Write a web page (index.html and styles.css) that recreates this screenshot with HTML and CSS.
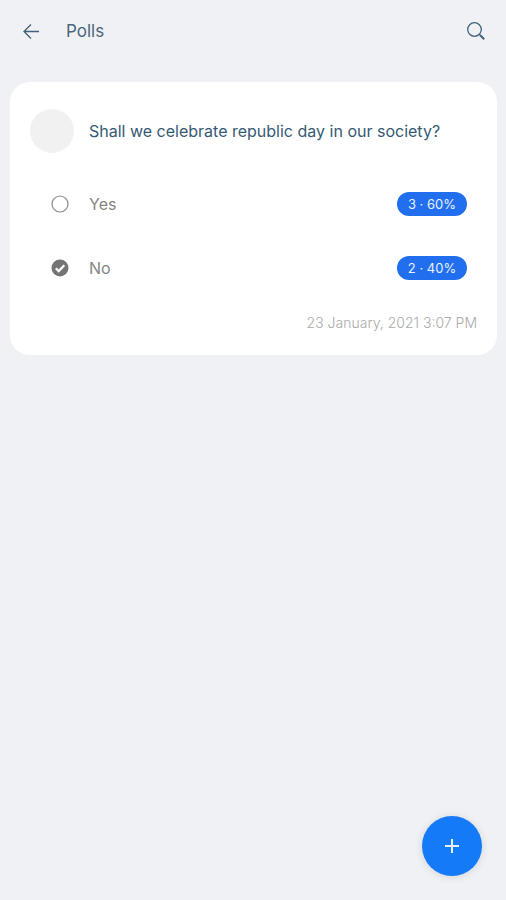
FILE: index.html
```html
<!DOCTYPE html>
<html lang="en">
<head>
  <meta charset="utf-8">
  <meta name="viewport" content="width=device-width, initial-scale=1">
  <title>Polls</title>
  <link rel="stylesheet" href="styles.css">
</head>
<body>
  <header class="app-bar">
    <button class="icon-button" type="button" aria-label="Back">
      <svg class="icon" viewBox="0 0 20 20" aria-hidden="true"><path d="M19 10.5H4M11 3.5l-7 7 7 7"/></svg>
    </button>
    <h1 class="app-title">Polls</h1>
    <button class="icon-button" type="button" aria-label="Search">
      <svg class="icon" viewBox="0 0 20 20" aria-hidden="true"><circle cx="8.5" cy="8.5" r="6.8"/><path d="M13.3 13.3l1.5 1.5"/><path class="handle" d="M14.2 14.2l4 4"/></svg>
    </button>
  </header>
  <main class="content">
    <form class="card">
      <div class="question">
        <span class="avatar"></span>
        <h2 class="question-text">Shall we celebrate republic day in our society?</h2>
      </div>
      <div class="option">
        <span class="choice">
          <input class="radio" type="radio" name="answer" id="answer-yes">
          <svg class="mark" viewBox="0 0 18 18" aria-hidden="true"><circle class="ring" cx="9" cy="9" r="8"/></svg>
        </span>
        <label class="option-label" for="answer-yes">Yes</label>
        <span class="votes">3 · 60%</span>
      </div>
      <div class="option">
        <span class="choice">
          <input class="radio" type="radio" name="answer" id="answer-no" checked>
          <svg class="mark" viewBox="0 0 18 18" aria-hidden="true"><circle class="disc" cx="9" cy="9" r="8.5"/><path class="tick" d="M4.8 9.2l2.9 2.9 5.6-5.8"/></svg>
        </span>
        <label class="option-label" for="answer-no">No</label>
        <span class="votes">2 · 40%</span>
      </div>
      <time class="date" datetime="2021-01-23T15:07">23 January, 2021 3:07 PM</time>
    </form>
  </main>
  <button class="fab" type="button" aria-label="Add poll">
    <svg class="plus" viewBox="0 0 14 14" aria-hidden="true"><path d="M7 0v14M0 7h14"/></svg>
  </button>
</body>
</html>
```
FILE: styles.css
```css
* {
  box-sizing: border-box;
}

body {
  margin: 0;
  min-height: 100vh;
  background: #eff1f5;
  color: #355a75;
  font-family: Inter, "Liberation Sans", sans-serif;
}

button {
  border: 0;
  padding: 0;
  cursor: pointer;
}

.app-bar {
  display: flex;
  align-items: center;
  padding: 11px 10px;
}

.icon-button {
  display: grid;
  place-items: center;
  width: 40px;
  height: 40px;
  background: none;
}

.icon {
  width: 20px;
  height: 20px;
  fill: none;
  stroke: #41627a;
  stroke-width: 1.3;
}

.handle {
  stroke-width: 2;
}

.app-title {
  flex: 1;
  margin: 0 0 0 16px;
  color: #4b6678;
  font-size: 17px;
  line-height: 24px;
  font-weight: 400;
}

.content {
  padding: 20px 9px 20px 10px;
}

.card {
  display: flex;
  flex-direction: column;
  padding: 27px 20px 22px;
  border-radius: 20px;
  background: #fff;
}

.question {
  display: flex;
  align-items: center;
  gap: 15px;
  margin-bottom: 19px;
}

.avatar {
  flex: none;
  width: 44px;
  height: 44px;
  border-radius: 50%;
  background: #f1f1f1;
}

.question-text {
  margin: 0;
  font-size: 16px;
  line-height: 24px;
  font-weight: 400;
}

.option {
  display: flex;
  align-items: center;
  height: 64px;
  padding: 0 10px 0 21px;
}

.choice {
  display: grid;
  width: 18px;
  height: 18px;
}

.radio,
.mark {
  grid-area: 1 / 1;
  width: 18px;
  height: 18px;
  margin: 0;
}

.radio {
  appearance: none;
  border-radius: 50%;
}

.mark {
  pointer-events: none;
}

.ring {
  fill: none;
  stroke: #888;
  stroke-width: 1.2;
}

.disc {
  fill: #757575;
}

.tick {
  fill: none;
  stroke: #fff;
  stroke-width: 2.2;
}

.option-label {
  flex: 1;
  margin-left: 20px;
  color: #858585;
  font-size: 16px;
  line-height: 24px;
}

.votes {
  min-width: 70px;
  border-radius: 12px;
  background: #216fee;
  color: #e9f1ff;
  font-size: 13px;
  line-height: 24px;
  text-align: center;
}

.date {
  align-self: flex-end;
  margin-top: 13px;
  color: #aaa;
  font-size: 14px;
  font-weight: 300;
  line-height: 20px;
}

.fab {
  position: fixed;
  right: 24px;
  bottom: 24px;
  display: grid;
  place-items: center;
  width: 60px;
  height: 60px;
  border-radius: 50%;
  background: #147af8;
  box-shadow: 0 1px 8px rgba(0, 0, 0, 0.12);
}

.plus {
  width: 14px;
  height: 14px;
  stroke: #e5f0ff;
  stroke-width: 2;
}
```
